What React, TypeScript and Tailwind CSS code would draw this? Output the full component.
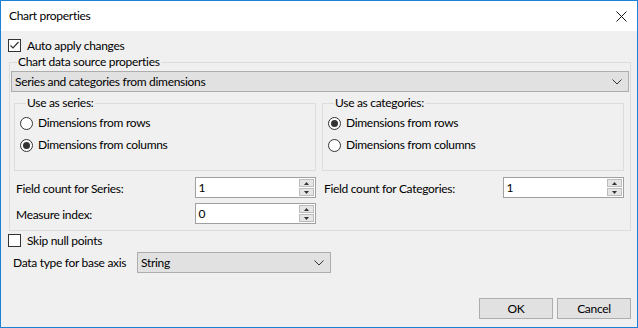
import React from "react";

function CheckBox({ checked }: { checked?: boolean }) {
  return (
    <span className="w-[13px] h-[13px] border border-[#333333] bg-white flex items-center justify-center shrink-0">
      {checked && (
        <svg width="11" height="11" viewBox="0 0 11 11">
          <path d="M1.5 5.5 L4 8 L9.5 2" fill="none" stroke="#333333" strokeWidth="1.2" />
        </svg>
      )}
    </span>
  );
}

function Radio({ checked }: { checked?: boolean }) {
  return (
    <span className="w-[13px] h-[13px] rounded-full border border-[#333333] bg-white flex items-center justify-center shrink-0">
      {checked && <span className="w-[7px] h-[7px] rounded-full bg-[#333333]" />}
    </span>
  );
}

function Chevron() {
  return (
    <svg width="10" height="6" viewBox="0 0 10 6">
      <path d="M0.5 0.5 L5 5 L9.5 0.5" fill="none" stroke="#333333" strokeWidth="1" />
    </svg>
  );
}

function Combo({ text, className }: { text: string; className: string }) {
  return (
    <div className={"h-[21px] border border-[#adadad] bg-[#e1e1e1] flex items-center justify-between pl-[3px] pr-[6px] " + className}>
      <span className="whitespace-nowrap">{text}</span>
      <Chevron />
    </div>
  );
}

function Spin({ value }: { value: string }) {
  return (
    <div className="w-[121px] h-[21px] border border-[#a0a0a0] bg-white flex items-stretch">
      <span className="flex-1 pl-[2px] flex items-center">{value}</span>
      <div className="w-[15px] my-[1px] mr-[1px] flex flex-col gap-[1px]">
        <div className="flex-1 bg-[#e5e5e5] border border-[#bcbcbc] flex items-center justify-center">
          <svg width="5" height="3" viewBox="0 0 5 3">
            <path d="M0 3 L2.5 0 L5 3 Z" fill="#333333" />
          </svg>
        </div>
        <div className="flex-1 bg-[#e5e5e5] border border-[#bcbcbc] flex items-center justify-center">
          <svg width="5" height="3" viewBox="0 0 5 3">
            <path d="M0 0 L2.5 3 L5 0 Z" fill="#333333" />
          </svg>
        </div>
      </div>
    </div>
  );
}

function RadioGroup({ title, first }: { title: string; first: boolean }) {
  return (
    <fieldset className="border border-[#dcdcdc] pl-[5px] pt-[1px] pb-[14px] m-0 min-w-0">
      <legend className="ml-[6px] px-[1px] leading-[16px]">{title}</legend>
      <label className="h-[22px] flex items-center gap-[5px]">
        <Radio checked={first} />
        <span className="whitespace-nowrap">Dimensions from rows</span>
      </label>
      <label className="h-[22px] flex items-center gap-[5px]">
        <Radio checked={!first} />
        <span className="whitespace-nowrap">Dimensions from columns</span>
      </label>
    </fieldset>
  );
}

export default function App() {
  return (
    <div className="w-[638px] h-[328px] border border-[#1a82d6] bg-[#f0f0f0] flex flex-col overflow-hidden text-[12px] tracking-[-0.3px] text-black font-['Lato',sans-serif] leading-[16px]">
      <div className="h-[30px] bg-white flex items-center justify-between pl-[8px] pr-[10px] shrink-0">
        <span>Chart properties</span>
        <svg width="11" height="11" viewBox="0 0 11 11">
          <path d="M0.5 0.5 L10.5 10.5 M10.5 0.5 L0.5 10.5" stroke="#111111" strokeWidth="1" />
        </svg>
      </div>
      <div className="flex-1 flex flex-col pl-[7px] pr-[6px] pt-[8px] pb-[8px]">
        <label className="flex items-center gap-[6px] h-[13px]">
          <CheckBox checked />
          <span>Auto apply changes</span>
        </label>
        <fieldset className="mt-[2px] ml-[1px] border border-[#dcdcdc] px-[1px] pt-[1px] pb-[6px] m-0 min-w-0">
          <legend className="ml-[6px] px-[1px] leading-[16px]">Chart data source properties</legend>
          <Combo text="Series and categories from dimensions" className="w-full" />
          <div className="grid grid-cols-[302px_302px] gap-x-[6px] ml-[3px] mt-[3px]">
            <RadioGroup title="Use as series:" first={false} />
            <RadioGroup title="Use as categories:" first={true} />
            <div className="mt-[6px] pl-[2px] flex flex-col gap-[5px]">
              <div className="flex items-center">
                <span className="w-[180px] pt-[3px] whitespace-nowrap">Field count for Series:</span>
                <Spin value="1" />
              </div>
              <div className="flex items-center">
                <span className="w-[180px] pt-[3px] whitespace-nowrap">Measure index:</span>
                <Spin value="0" />
              </div>
            </div>
            <div className="mt-[6px] pl-[2px] flex flex-col gap-[5px]">
              <div className="flex items-center">
                <span className="w-[180px] pt-[3px] whitespace-nowrap">Field count for Categories:</span>
                <Spin value="1" />
              </div>
            </div>
          </div>
        </fieldset>
        <label className="mt-[3px] flex items-center gap-[6px] h-[13px]">
          <CheckBox />
          <span>Skip null points</span>
        </label>
        <div className="mt-[5px] flex items-center pl-[5px]">
          <span className="w-[124px] pt-[1px] whitespace-nowrap">Data type for base axis</span>
          <Combo text="String" className="w-[194px]" />
        </div>
        <div className="mt-auto flex justify-end gap-[4px]">
          <button className="w-[74px] h-[21px] border border-[#adadad] bg-[#e1e1e1]">OK</button>
          <button className="w-[74px] h-[21px] border border-[#adadad] bg-[#e1e1e1]">Cancel</button>
        </div>
      </div>
    </div>
  );
}
